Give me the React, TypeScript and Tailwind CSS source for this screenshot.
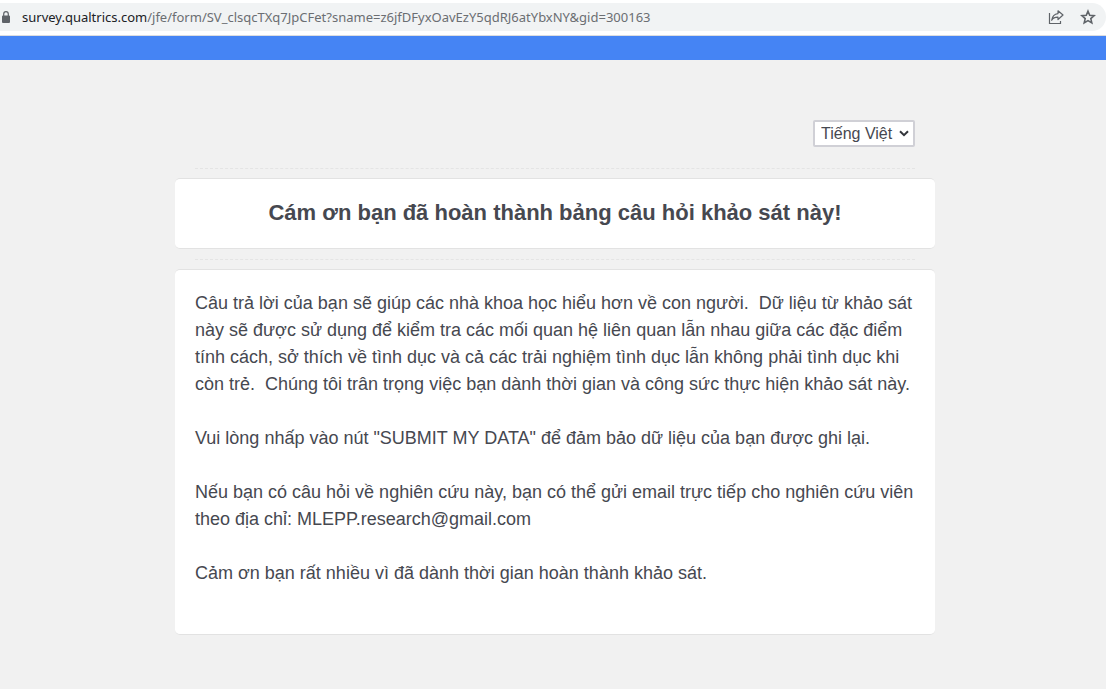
import React from "react";

function AddressBar() {
  return (
    <header className="border-b border-[#dcdde0] bg-white pt-[3px] pb-1">
      <div className="flex h-7 items-center rounded-r-full bg-[#f1f3f4] pr-2.5 pl-[2px]">
        <svg width="8" height="12" viewBox="0 0 8 12" aria-hidden="true" className="shrink-0">
          <path d="M1 4.5h6a1 1 0 0 1 1 1V11a1 1 0 0 1-1 1H1a1 1 0 0 1-1-1V5.500a1 1 0 0 1 1-1z" fill="#5f6368" />
          <path d="M1.700 5V3a2.300 2.300 0 0 1 4.600 0v2" fill="none" stroke="#5f6368" strokeWidth="1.200" />
        </svg>
        <p className="ml-3 min-w-0 flex-1 truncate font-['Noto_Sans','Open_Sans',sans-serif] text-[13px] leading-5 text-[#6b6e72]">
          <span className="text-[#202124]">survey.qualtrics.com</span>
          /jfe/form/SV_clsqcTXq7JpCFet?sname=z6jfDFyxOavEzY5qdRJ6atYbxNY&amp;gid=300163
        </p>
        <div className="flex shrink-0 items-center gap-4">
          <button type="button" aria-label="Share this page">
            <svg width="16" height="16" viewBox="0 0 16 16" fill="none" stroke="#5f6368" strokeWidth="1.200" className="block">
              <path d="M1.500 4v10.500h11V12" />
              <path d="M10 1.800l5 4.200-5 4.500V8.200C7 8.100 5 9 3.700 11.300 4.200 7.600 6.300 5 10 4.600z" strokeLinejoin="round" />
            </svg>
          </button>
          <button type="button" aria-label="Bookmark this page">
            <svg width="16" height="16" viewBox="0 0 16 16" fill="none" stroke="#5f6368" strokeWidth="1.600" className="block">
              <path d="M8 2.200l1.700 4.100 4.400.4-3.300 2.900 1 4.300L8 11.600l-3.800 2.300 1-4.300-3.300-2.900 4.400-.4z" />
            </svg>
          </button>
        </div>
      </div>
    </header>
  );
}

function Separator() {
  return <div className="mx-5 border-t border-dashed border-[#e4e4e4]" />;
}

export default function App() {
  return (
    <div className="min-h-screen bg-[#f1f1f1] font-['Liberation_Sans',Arial,sans-serif] text-[#464850]">
      <AddressBar />
      <div className="h-6 bg-[#4584f4]" />
      <main className="pt-15 pb-12 pl-1">
        <div className="mx-auto max-w-[760px]">
          <div className="mb-[21px] flex justify-end pr-5">
            <div className="relative">
              <select
                aria-label="Ngôn ngữ"
                defaultValue="vi"
                className="block h-[27px] w-[102px] appearance-none rounded-[2px] border-2 border-[#d0d0d6] bg-white pl-[6px] text-base leading-5"
              >
                <option value="vi">Tiếng Việt</option>
                <option value="en">English</option>
              </select>
              <svg
                width="10"
                height="7"
                viewBox="0 0 10 7"
                aria-hidden="true"
                className="pointer-events-none absolute top-[10px] right-[6px]"
              >
                <path d="M1 1.200l4 4 4-4" fill="none" stroke="#33353b" strokeWidth="2" />
              </svg>
            </div>
          </div>
          <Separator />
          <section className="mt-[9px] mb-[10px] rounded-[5px] border-y border-[#e2e2e2] bg-white px-5 pt-[17px] pb-[19px]">
            <h1 className="text-center text-[22px] leading-[33px] font-bold">
              Cám ơn bạn đã hoàn thành bảng câu hỏi khảo sát này!
            </h1>
          </section>
          <Separator />
          <section className="mt-[9px] space-y-[27px] rounded-[5px] border-y border-[#e2e2e2] bg-white px-5 pt-5 pb-[47px] text-lg leading-[27px]">
            <p>
              Câu trả lời của bạn sẽ giúp các nhà khoa học hiểu hơn về con người.&nbsp; Dữ liệu từ khảo sát này sẽ được
              sử dụng để kiểm tra các mối quan hệ liên quan lẫn nhau giữa các đặc điểm tính cách, sở thích về tình dục
              và cả các trải nghiệm tình dục lẫn không phải tình dục khi còn trẻ.&nbsp; Chúng tôi trân trọng việc bạn
              dành thời gian và công sức thực hiện khảo sát này.
            </p>
            <p>Vui lòng nhấp vào nút "SUBMIT MY DATA" để đảm bảo dữ liệu của bạn được ghi lại.</p>
            <p>
              Nếu bạn có câu hỏi về nghiên cứu này, bạn có thể gửi email trực tiếp cho nghiên cứu viên theo địa chỉ:
              MLEPP.research@gmail.com
            </p>
            <p>Cảm ơn bạn rất nhiều vì đã dành thời gian hoàn thành khảo sát.</p>
          </section>
        </div>
      </main>
    </div>
  );
}
